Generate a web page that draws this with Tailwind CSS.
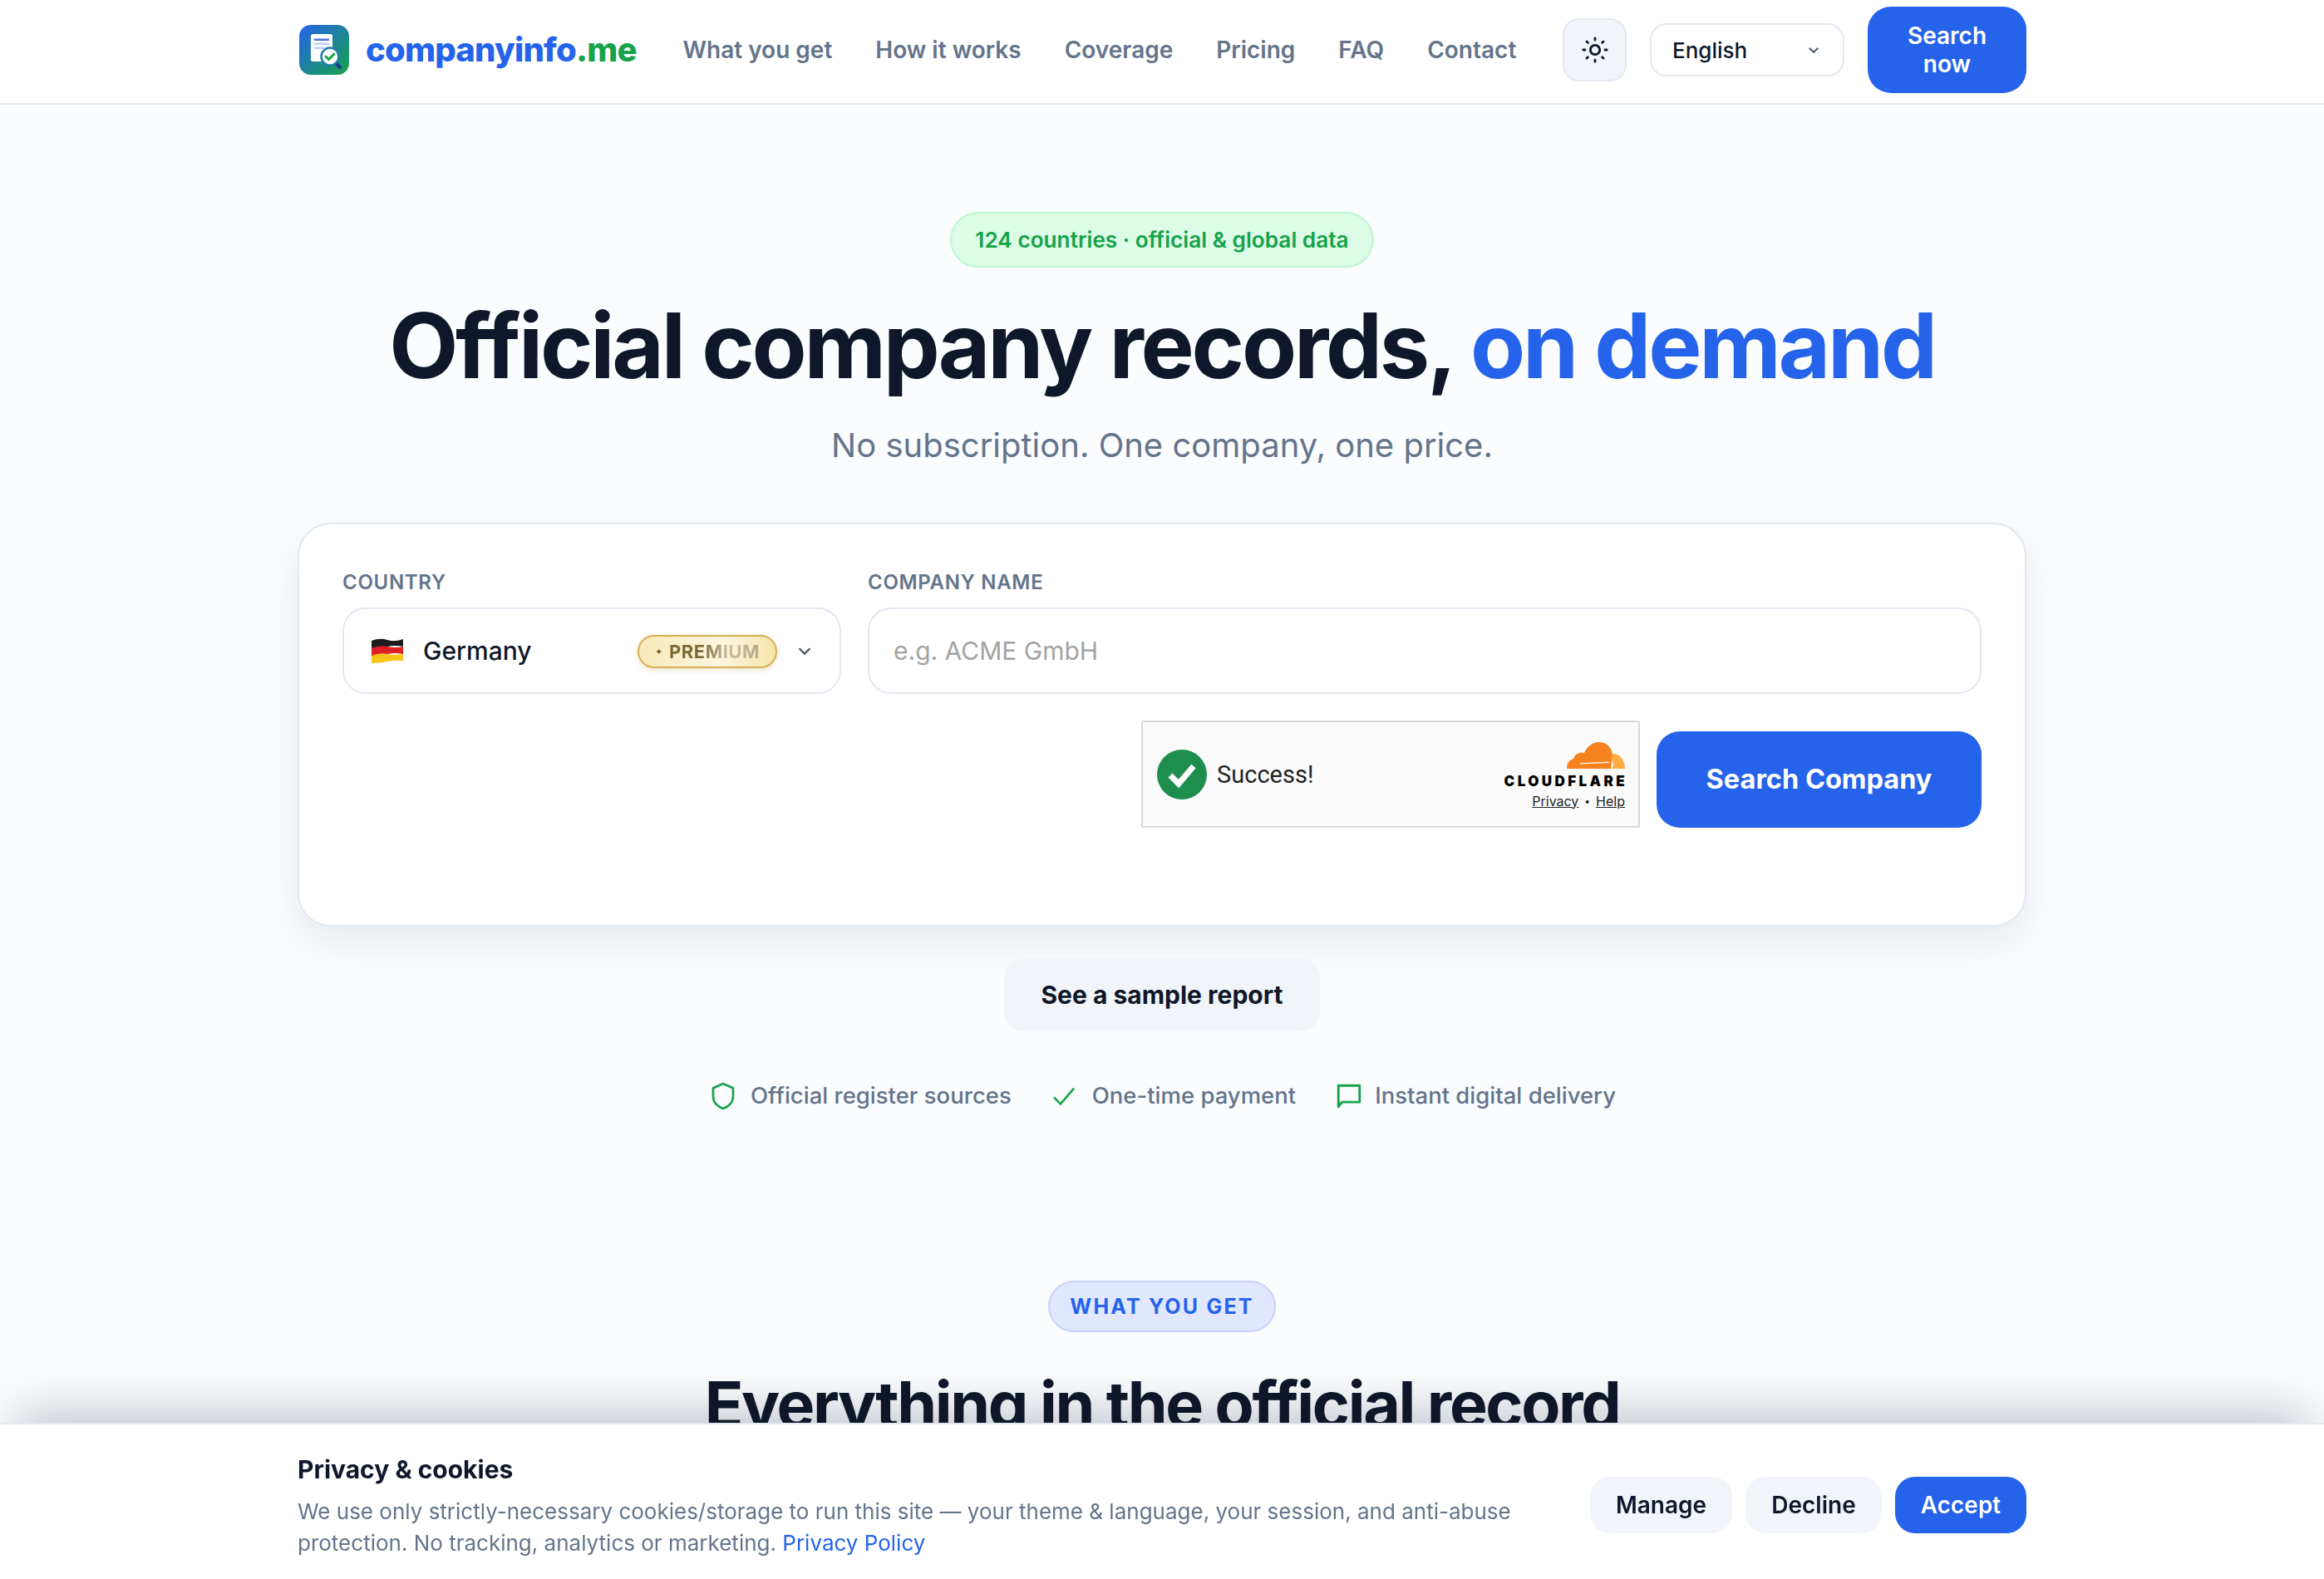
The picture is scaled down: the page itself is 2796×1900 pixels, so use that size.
<!DOCTYPE html>
<html lang="en">
<head>
  <meta charset="UTF-8">
  <title>companyinfo.me</title>
  <script src="https://cdn.jsdelivr.net/npm/@tailwindcss/browser@4"></script>
</head>
<body class="bg-[#fafcfe] text-[#0f172a] font-[Inter,sans-serif] h-[1900px] overflow-hidden">
  <!-- header -->
  <header class="h-[126px] pb-[4px] bg-white border-b-2 border-[#e2e8f0]">
    <div class="w-[2080px] mx-auto h-full flex items-center justify-between">
      <a class="flex items-center gap-[20px] ml-[2px]">
        <svg class="w-[60px] h-[60px]" viewBox="0 0 60 60">
          <defs>
            <linearGradient id="logo-bg" x1="0" y1="0" x2="1" y2="1">
              <stop offset="0" stop-color="#2563eb"/>
              <stop offset="1" stop-color="#16a34a"/>
            </linearGradient>
          </defs>
          <rect width="60" height="60" rx="14" fill="url(#logo-bg)"/>
          <rect x="14" y="11" width="26" height="33" rx="2.500" fill="#fff"/>
          <rect x="18" y="16.500" width="18" height="2.500" fill="#4f70e8"/>
          <rect x="18" y="21.500" width="18" height="2.500" fill="#bcd0f7"/>
          <rect x="18" y="26.500" width="12" height="2.500" fill="#bcd0f7"/>
          <path d="M44 46l5 5" stroke="#1e3a8a" stroke-width="4" stroke-linecap="round"/>
          <circle cx="37" cy="38" r="10.500" fill="#fff" stroke="#1d7fa8" stroke-width="2.500"/>
          <path d="M32 38l3.500 3.500 6.500-6.500" fill="none" stroke="#16a34a" stroke-width="3" stroke-linecap="round" stroke-linejoin="round"/>
        </svg>
        <span class="text-[40px] font-extrabold tracking-[-0.8px] text-[#2563eb] whitespace-nowrap">companyinfo<span class="text-[#16a34a]">.me</span></span>
      </a>
      <nav class="flex items-center gap-[52px] text-[28px] font-semibold text-[#64748b] whitespace-nowrap">
        <a>What you get</a>
        <a>How it works</a>
        <a>Coverage</a>
        <a>Pricing</a>
        <a>FAQ</a>
        <a>Contact</a>
      </nav>
      <div class="flex items-center gap-[28px]">
        <button class="w-[77px] h-[76px] rounded-[20px] bg-[#f1f5f9] border-2 border-[#e2e8f0] flex items-center justify-center">
          <svg class="w-[34px] h-[34px]" viewBox="0 0 24 24" fill="none" stroke="#0f172a" stroke-width="2" stroke-linecap="round">
            <circle cx="12" cy="12" r="4"/>
            <path d="M12 2v1.500M12 20.500V22M4.900 4.900l1 1M18.100 18.100l1 1M2 12h1.500M20.500 12H22M4.900 19.100l1-1M18.100 5.900l1-1"/>
          </svg>
        </button>
        <div class="w-[234px] h-[64px] rounded-[20px] bg-white border-2 border-[#e2e8f0] flex items-center justify-between pl-[25px] pr-[26px] text-[26px] font-medium">
          <span>English</span>
          <svg class="w-[18px] h-[18px]" viewBox="0 0 24 24" fill="none" stroke="#475569" stroke-width="2.500"><path d="M5 9l7 7 7-7"/></svg>
        </div>
        <button class="w-[191px] h-[104px] rounded-[28px] bg-[#2563eb] text-white text-[28px] font-semibold leading-[34px]">Search<br>now</button>
      </div>
    </div>
  </header>

  <main class="w-[2080px] mx-auto flex flex-col items-center">
    <div class="mt-[129px] h-[67px] px-[28px] flex items-center rounded-full bg-[#dcfce7] border-2 border-[#bbf7d0] text-[#16a34a] text-[26.200px] font-semibold">124 countries · official &amp; global data</div>
    <h1 class="mt-[32px] text-[108px] leading-[124px] font-bold tracking-[-3.240px] whitespace-nowrap">Official company records, <span class="text-[#2563eb]">on demand</span></h1>
    <p class="mt-[28px] text-[40px] leading-[60px] text-[#64748b]">No subscription. One company, one price.</p>

    <!-- search card -->
    <section class="mt-[63px] w-full h-[486px] rounded-[40px] bg-white border-2 border-[#e2e8f0] shadow-[0_20px_50px_rgba(15,23,42,0.08)] px-[52px] pt-[54px]">
      <div class="flex gap-[32px]">
        <div class="w-[600px]">
          <label class="block text-[24px] leading-[32px] font-semibold text-[#64748b] tracking-[0.7px] mb-[14px]">COUNTRY</label>
          <div class="h-[104px] rounded-[28px] border-2 border-[#e2e8f0] bg-white flex items-center pl-[32px] pr-[31px]">
            <svg class="w-[40px] h-[32px]" viewBox="0 0 40 32">
              <path d="M1 4 Q11 0 20 3 T39 2 V11 Q29 9 20 11 T1 13Z" fill="#1c1c1c"/>
              <path d="M1 13 Q11 9 20 11 T39 11 V20 Q29 18 20 20 T1 22Z" fill="#dd1f26"/>
              <path d="M1 22 Q11 18 20 20 T39 20 V28 Q29 27 20 29 T1 31Z" fill="#f5c518"/>
            </svg>
            <span class="ml-[23px] text-[30px] font-medium">Germany</span>
            <span class="ml-auto mt-[2px] h-[40px] w-[168px] rounded-full border-2 border-[#d4b253] bg-[linear-gradient(100deg,#f8e9b9,#fdf6df_60%,#f5e3a8)] shadow-[0_2px_6px_rgba(180,140,40,0.25)] flex items-center justify-center gap-[8px]">
              <span class="text-[11px] text-[#6b5a22]">✦</span>
              <span class="text-[22px] font-bold tracking-[0.5px] bg-[linear-gradient(90deg,#7a6a35_35%,#c9bda0_65%,#b5a988)] bg-clip-text text-transparent">PREMIUM</span>
            </span>
            <svg class="w-[22px] h-[22px] ml-[22px]" viewBox="0 0 24 24" fill="none" stroke="#475569" stroke-width="2.500"><path d="M5 9l7 7 7-7"/></svg>
          </div>
        </div>
        <div class="flex-1">
          <label class="block text-[24px] leading-[32px] font-semibold text-[#64748b] tracking-[0.7px] mb-[14px]">COMPANY NAME</label>
          <div class="h-[104px] rounded-[28px] border-2 border-[#e2e8f0] bg-white flex items-center pl-[29px] text-[30px] text-[#a3a3a3]">e.g. ACME GmbH</div>
        </div>
      </div>
      <div class="mt-[32px] flex justify-end items-end gap-[20px]">
        <div class="w-[600px] h-[129px] bg-[#fafafa] border-2 border-[#d9d9d9] rounded-[2px] flex items-center pl-[17px] pr-[16px]">
          <svg class="w-[60px] h-[60px]" viewBox="0 0 60 60">
            <circle cx="30" cy="30" r="30" fill="#1e8e4e"/>
            <path d="M16 31l10 10 18-21" fill="none" stroke="#fff" stroke-width="7"/>
          </svg>
          <span class="ml-[12px] mt-[3px] text-[29px] text-[#232323] font-[Roboto,sans-serif]">Success!</span>
          <div class="ml-auto pt-[4px] flex flex-col items-end">
            <svg class="w-[70px] h-[32px]" viewBox="0 0 70 32">
              <path d="M0 32 Q0 22 8 20 C10 14 16 11 21 13 C25 4 32 0 39 0 C47 0 54 6 55 15 L53 32 Z" fill="#f6821f"/>
              <path d="M16 25 L50 23.500 L52 25 L16 26.500Z" fill="#fff" opacity=".85"/>
              <path d="M54 32 Q58 26 53 20 L55 14 C62 13 70 20 70 32Z" fill="#fbad41"/>
            </svg>
            <span class="mt-[5px] text-[17px] leading-[20px] font-black tracking-[3.400px] mr-[-3px] text-black">CLOUDFLARE</span>
            <span class="mt-[3px] text-[16px] leading-[22px] text-[#232323] flex items-center"><a class="underline">Privacy</a><span class="mx-[7px] text-[12px]">•</span><a class="underline">Help</a></span>
          </div>
        </div>
        <button class="w-[391px] h-[116px] rounded-[28px] bg-[#2563eb] text-white text-[32.500px] font-bold">Search Company</button>
      </div>
    </section>

    <button class="mt-[38px] w-[380px] h-[88px] rounded-[24px] bg-[#f1f5f9] text-[30px] font-bold">See a sample report</button>

    <div class="mt-[57px] flex items-center gap-[47px] text-[27.500px] font-medium text-[#64748b] whitespace-nowrap">
      <span class="flex items-center gap-[15px]">
        <svg class="w-[36px] h-[36px]" viewBox="0 0 24 24" fill="none" stroke="#16a34a" stroke-width="1.800" stroke-linejoin="round"><path d="M12 2l8 3.500v6.500c0 5-3.500 8.500-8 10-4.500-1.500-8-5-8-10V5.500z"/></svg>
        Official register sources
      </span>
      <span class="flex items-center gap-[18px]">
        <svg class="w-[32px] h-[32px]" viewBox="0 0 24 24" fill="none" stroke="#16a34a" stroke-width="2"><path d="M3 13l6 6L21 5"/></svg>
        One-time payment
      </span>
      <span class="flex items-center gap-[14px]">
        <svg class="w-[34px] h-[34px]" viewBox="0 0 24 24" fill="none" stroke="#16a34a" stroke-width="2" stroke-linejoin="round"><path d="M3 3h18v14H6l-3 4z"/></svg>
        Instant digital delivery
      </span>
    </div>

    <div class="mt-[202px] h-[62px] px-[24px] flex items-center rounded-full bg-[#e0e7ff] border-2 border-[#c7d2fe] text-[#2563eb] text-[25px] font-bold tracking-[2.200px]">WHAT YOU GET</div>
    <h2 class="mt-[39px] text-[77px] leading-[96px] font-bold tracking-[-2.400px] whitespace-nowrap">Everything in the official record</h2>
  </main>

  <!-- cookie banner -->
  <aside class="fixed bottom-0 inset-x-0 h-[188px] bg-white border-t-2 border-[#e2e8f0] shadow-[0_-30px_60px_-20px_rgba(15,23,42,0.26)]">
    <div class="w-[2080px] mx-auto h-full flex items-center justify-between pt-[10px]">
      <div class="w-[1480px]">
        <h3 class="text-[30px] leading-[40px] font-bold">Privacy &amp; cookies</h3>
        <p class="mt-[12px] text-[26px] leading-[38px] text-[#64748b]">We use only strictly-necessary cookies/storage to run this site — your theme &amp; language, your session, and anti-abuse protection. No tracking, analytics or marketing. <a class="text-[#2563eb]">Privacy Policy</a></p>
      </div>
      <div class="flex gap-[16px] text-[28px] font-semibold mt-[-3px]">
        <button class="w-[171px] h-[68px] rounded-[24px] bg-[#f1f5f9]">Manage</button>
        <button class="w-[164px] h-[68px] rounded-[24px] bg-[#f1f5f9]">Decline</button>
        <button class="w-[158px] h-[68px] rounded-[24px] bg-[#2563eb] text-white">Accept</button>
      </div>
    </div>
  </aside>
</body>
</html>
